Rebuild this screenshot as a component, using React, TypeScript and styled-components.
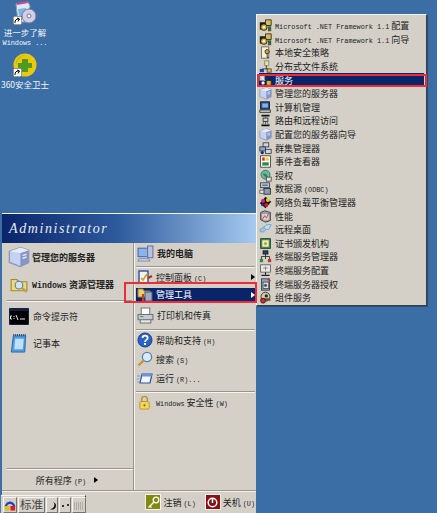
import React from 'react';
import styled, { createGlobalStyle } from 'styled-components';

const GlobalStyle = createGlobalStyle`
    html, body {
        margin: 0;
        padding: 0;
        background: #3a6ea5;
    }
    * {
        box-sizing: border-box;
    }
`;

const Desktop = styled.div`
    position: relative;
    width: 437px;
    height: 513px;
    overflow: hidden;
    background: #3a6ea5;
    font-family: 'Noto Sans CJK SC', 'Liberation Sans', sans-serif;
    font-size: 9px;
    color: #222222;
`;

const Shortcut = styled.div<{ $top: number }>`
    position: absolute;
    left: 0;
    top: ${(p) => p.$top}px;
    width: 50px;
    display: flex;
    flex-direction: column;
    align-items: center;
    color: #f2f5fa;
    line-height: 9px;
    white-space: nowrap;
`;

const ShortcutIcon = styled.div`
    position: relative;
    width: 24px;
    height: 24px;
    margin-bottom: 3px;
`;

const ShortcutLabel = styled.div`
    height: 9px;
    font-size: 8.5px;
`;

const Arrow = styled.svg`
    position: absolute;
    left: 0;
    bottom: 0;
`;

const Latin = styled.span<{ $bold?: boolean }>`
    font-family: 'Liberation Mono', monospace;
    font-size: ${(p) => (p.$bold ? 8.3 : 6.8)}px;
`;

const StartMenu = styled.div`
    position: absolute;
    left: 2px;
    top: 213px;
    width: 254px;
    height: 300px;
    display: flex;
    flex-direction: column;
    background: #d4d0c8;
    border-top: 1px solid #f4f4f0;
`;

const Banner = styled.div`
    height: 29px;
    flex: none;
    display: flex;
    align-items: center;
    padding-left: 7px;
    background: linear-gradient(90deg, #0a246a 0%, #2d5a9c 45%, #a6caf0 100%);
    color: #e8edf5;
    font-family: 'Liberation Serif', serif;
    font-style: italic;
    font-size: 14px;
    letter-spacing: 1.6px;
`;

const Columns = styled.div`
    flex: 1;
    display: flex;
    min-height: 0;
`;

const LeftColumn = styled.div`
    width: 131px;
    flex: none;
    display: flex;
    flex-direction: column;
    padding-left: 5px;
`;

const RightColumn = styled.div`
    flex: 1;
    display: flex;
    flex-direction: column;
    padding-left: 2px;
    border-left: 1px solid #9a978f;
    box-shadow: inset 1px 0 0 #f2f0ea;
`;

const Row = styled.div<{
    $h: number;
    $mt?: number;
    $active?: boolean;
    $gap?: number;
    $pl?: number;
    $strong?: boolean;
}>`
    display: flex;
    align-items: center;
    flex: none;
    gap: ${(p) => p.$gap ?? 3}px;
    height: ${(p) => p.$h}px;
    margin-top: ${(p) => p.$mt ?? 0}px;
    padding-left: ${(p) => p.$pl ?? 1}px;
    white-space: nowrap;
    font-weight: ${(p) => (p.$strong ? 700 : 400)};
    background: ${(p) => (p.$active ? '#0a246a' : 'transparent')};
    color: ${(p) => (p.$active ? '#ffffff' : 'inherit')};
`;

const RowArrow = styled.span<{ $light?: boolean; $inline?: boolean }>`
    margin-left: ${(p) => (p.$inline ? 0 : 'auto')};
    margin-right: ${(p) => (p.$inline ? 0 : 1)}px;
    width: 0;
    height: 0;
    border-left: 4px solid ${(p) => (p.$light ? '#ffffff' : '#000000')};
    border-top: 3px solid transparent;
    border-bottom: 3px solid transparent;
`;

const Rule = styled.div<{ $mt: number; $mb?: number; $inset?: number }>`
    height: 2px;
    flex: none;
    margin: ${(p) => p.$mt}px ${(p) => p.$inset ?? 1}px ${(p) => p.$mb ?? 0}px 0;
    border-top: 1px solid #97948c;
    border-bottom: 1px solid #f6f5f1;
`;

const Spacer = styled.div`
    flex: 1;
`;

const AllPrograms = styled.div`
    height: 20px;
    flex: none;
    display: flex;
    align-items: center;
    justify-content: center;
    gap: 8px;
    padding-right: 6px;
    white-space: nowrap;
`;

const Footer = styled.div`
    height: 23px;
    flex: none;
    display: flex;
    align-items: center;
    justify-content: flex-end;
    gap: 9px;
    padding-right: 1px;
    border-top: 1px solid #9a978f;
    box-shadow: inset 0 1px 0 #f2f0ea;
`;

const FooterButton = styled.div`
    display: flex;
    align-items: center;
    gap: 2px;
    white-space: nowrap;
`;

const FooterIcon = styled.div<{ $color: string }>`
    width: 16px;
    height: 16px;
    display: flex;
    align-items: center;
    justify-content: center;
    background: ${(p) => p.$color};
    border: 1px solid #f3f2ee;
`;

const LanguageBar = styled.div`
    position: absolute;
    left: 1px;
    top: 495px;
    width: 85px;
    height: 18px;
    display: flex;
    align-items: stretch;
    gap: 1px;
    padding: 1px 1px 0 2px;
    background: #d4d0c8;
    border-top: 1px solid #f4f4f0;
    border-right: 1px solid #333333;
    box-shadow: -1px 0 0 #4d7cb0;
`;

const LangKey = styled.div<{ $w: number }>`
    width: ${(p) => p.$w}px;
    flex: none;
    display: flex;
    align-items: center;
    justify-content: center;
    background: #d4d0c8;
    border: 1px solid;
    border-color: #f4f4f0 #77746c #77746c #f4f4f0;
    font-size: 11.5px;
    line-height: 1;
    color: #444444;
    white-space: nowrap;
`;

const Submenu = styled.div`
    position: absolute;
    left: 256px;
    top: 14px;
    width: 171px;
    height: 292px;
    padding: 4px 2px 2px 2px;
    background: #d4d0c8;
    border: 1px solid;
    border-color: #f4f4f0 #404040 #404040 #f4f4f0;
    box-shadow: 1px 1px 0 #244f7e;
`;

const SubRow = styled.div<{ $active?: boolean }>`
    height: 13.6px;
    display: flex;
    align-items: center;
    gap: 3px;
    padding-left: 0;
    white-space: nowrap;
    background: ${(p) => (p.$active ? '#0a246a' : 'transparent')};
    color: ${(p) => (p.$active ? '#ffffff' : 'inherit')};
`;

const Callout = styled.div<{ $l: number; $t: number; $w: number; $h: number }>`
    position: absolute;
    left: ${(p) => p.$l}px;
    top: ${(p) => p.$t}px;
    width: ${(p) => p.$w}px;
    height: ${(p) => p.$h}px;
    border: 2px solid #ee2b36;
    pointer-events: none;
`;

const shapes: Record<string, React.ReactNode> = {
    dotnet: (
        <>
            <rect x="1" y="4" width="8" height="9" fill="#1c1c1c" />
            <path d="M8 1h7v7H8z" fill="#d8bc50" stroke="#222" />
            <circle cx="6" cy="10" r="4" fill="#d8b030" stroke="#111" />
            <circle cx="6" cy="10" r="1.500" fill="#fff" />
            <path d="M11 9h4v6h-4z" fill="#2a6a3a" />
            <path d="M11 13h2v2h-2z" fill="#c62a2a" />
        </>
    ),
    policy: (
        <>
            <path d="M3 1h9v14H3z" fill="#f5f0d8" stroke="#555" />
            <circle cx="10" cy="7" r="2.600" fill="#d9a520" stroke="#222" />
            <path d="M10 9v5h2" stroke="#222" fill="none" />
        </>
    ),
    dfs: (
        <>
            <path d="M7 1h5v6H7z" fill="#f4e08a" stroke="#777" />
            <path d="M9 7v4M4 11h8" stroke="#222" />
            <rect x="1" y="11" width="5" height="4" fill="#1d3fa8" />
            <rect x="10" y="11" width="5" height="4" fill="#e8c23a" stroke="#444" />
        </>
    ),
    services: (
        <>
            <rect x="1" y="2" width="6" height="6" fill="#d8d8d8" stroke="#888" />
            <path d="M9 8h6v6H9z" fill="#d9b030" stroke="#222" />
            <circle cx="5" cy="11" r="2" fill="#fff" />
            <path d="M3 4l4 4" stroke="#fff" />
        </>
    ),
    server: (
        <>
            <path d="M1 4l8-3 6 2v9l-6 3-8-3z" fill="#c6d2f2" stroke="#8d97b8" />
            <path d="M9 5l6-2v9l-6 3z" fill="#8795c6" />
            <path d="M1 4l8 1 6-2-6-2z" fill="#e6ebfa" />
            <path d="M10.500 7l3-1M10.500 9l3-1" stroke="#e4e8f5" />
        </>
    ),
    computer: (
        <>
            <rect x="2" y="1" width="11" height="9" fill="#2a4f9a" stroke="#111" />
            <rect x="4" y="3" width="7" height="5" fill="#7fb2ea" />
            <path d="M1 11h13v3H1z" fill="#cfcfc8" stroke="#222" />
        </>
    ),
    routing: (
        <>
            <path d="M3 2h10M3 14h10" stroke="#111" strokeWidth="2" />
            <path d="M8 3v10M4 13l4-6 4 6" stroke="#2a5f6a" fill="none" />
            <rect x="5" y="5" width="6" height="4" fill="#d8d8d0" stroke="#222" />
        </>
    ),
    cluster: (
        <>
            <rect x="5" y="1" width="7" height="5" fill="#cfd6ea" stroke="#333" />
            <rect x="1" y="6" width="7" height="5" fill="#8fa4d8" stroke="#333" />
            <rect x="8" y="9" width="7" height="5" fill="#cfd6ea" stroke="#333" />
            <circle cx="4" cy="13" r="2" fill="#1b2d6b" />
        </>
    ),
    events: (
        <>
            <rect x="2" y="1" width="12" height="14" fill="#fff" stroke="#333" />
            <rect x="4" y="3" width="3" height="4" fill="#d92b2b" />
            <rect x="8" y="3" width="4" height="4" fill="#f0d020" />
            <rect x="4" y="9" width="8" height="4" fill="#2a8a4a" />
        </>
    ),
    license: (
        <>
            <circle cx="8" cy="7" r="5.500" fill="#6fb7a8" stroke="#2b6a60" />
            <path d="M5 5l4 1 2 4-5-1z" fill="#2f8f46" />
            <rect x="9" y="10" width="6" height="5" fill="#e8e4da" stroke="#444" />
        </>
    ),
    odbc: (
        <>
            <rect x="2" y="1" width="11" height="6" fill="#c5cbd8" stroke="#333" />
            <rect x="4" y="3" width="7" height="2" fill="#5b79b8" />
            <rect x="6" y="8" width="8" height="7" fill="#8d9ab5" stroke="#222" />
            <path d="M1 10h5v4H1z" fill="#e6e6e0" stroke="#555" />
        </>
    ),
    balance: (
        <>
            <path d="M8 1l7 6-7 8-7-6z" fill="#111" />
            <circle cx="11" cy="5" r="2.500" fill="#e0d020" />
            <circle cx="5" cy="6" r="2.500" fill="#d81f8a" />
            <circle cx="9" cy="11" r="2.500" fill="#d32020" />
            <circle cx="4" cy="11" r="1.600" fill="#2040c0" />
        </>
    ),
    perf: (
        <>
            <path d="M2 3l5-2 7 2v10l-6 2-6-3z" fill="#8fa2b8" stroke="#333" />
            <path d="M4 5h8v7H4z" fill="#e6d8c0" />
            <path d="M4 12l3-5 2 3 3-6" stroke="#c8252a" fill="none" />
        </>
    ),
    remote: (
        <>
            <path d="M1 8l5-3h4l-4 6H2z" fill="#9fc4e8" stroke="#6f9cc8" />
            <path d="M6 5l4-3h5l-3 6H8z" fill="#bcdcf4" stroke="#6f9cc8" />
        </>
    ),
    cert: (
        <>
            <rect x="2" y="2" width="12" height="12" fill="#3f8a4a" stroke="#1f3d22" />
            <rect x="4" y="4" width="8" height="8" fill="#f0ecc8" />
            <circle cx="8" cy="8" r="2" fill="#c9a227" />
        </>
    ),
    tsManager: (
        <>
            <rect x="5" y="1" width="6" height="4" fill="#2c3f7a" stroke="#111" />
            <path d="M8 5v6M3 8h10M3 8v3M13 8v3" stroke="#222" fill="none" />
            <rect x="1" y="11" width="4" height="4" fill="#2d8a3e" />
            <rect x="11" y="11" width="4" height="4" fill="#c92f2f" />
        </>
    ),
    tsConfig: (
        <>
            <rect x="2" y="1" width="12" height="9" fill="#eceae2" stroke="#555" />
            <path d="M5 5h6M8 3v5" stroke="#777" />
            <path d="M8 10v3M3 14h10" stroke="#222" strokeWidth="1.400" />
        </>
    ),
    tsLicense: (
        <>
            <rect x="3" y="1" width="10" height="14" fill="#8fa3c8" stroke="#334" />
            <rect x="5" y="5" width="7" height="8" fill="#f2e6a8" stroke="#444" />
            <circle cx="8" cy="9" r="2" fill="#2a5fbf" />
            <path d="M11 1l3 3" stroke="#c62a2a" strokeWidth="2" />
        </>
    ),
    component: (
        <>
            <circle cx="8" cy="7" r="5.500" fill="#d9c9a0" stroke="#222" />
            <path d="M2 9h12v3H2z" fill="#6b4a2a" />
            <circle cx="5" cy="12" r="3" fill="#d62b2b" stroke="#222" />
            <circle cx="9" cy="6" r="2" fill="#1d2b4a" />
        </>
    ),
    folder: (
        <>
            <path d="M1 4h5l2 2h7v8H1z" fill="#f0d878" stroke="#a08a30" />
            <circle cx="8" cy="9" r="3.400" fill="#cfe4f5" stroke="#5d7da0" />
            <path d="M10.500 11.500L15 15" stroke="#c79a4a" strokeWidth="2" />
        </>
    ),
    mypc: (
        <>
            <rect x="1" y="3" width="10" height="8" fill="#8ab4ea" stroke="#4a6aa8" />
            <path d="M10 1h5v11h-5z" fill="#b9c3e0" stroke="#66749c" />
            <path d="M2 13h9l1 2H1z" fill="#d6dcee" stroke="#7f8ab0" />
        </>
    ),
    control: (
        <>
            <rect x="2" y="2" width="9" height="12" fill="#f2f2ee" stroke="#2a52a8" strokeWidth="1.400" />
            <path d="M4 9l2 2 4-6" stroke="#d6a010" strokeWidth="1.600" fill="none" />
            <path d="M11 9l4-2" stroke="#c2281f" strokeWidth="2" />
        </>
    ),
    tools: (
        <>
            <path d="M1 2h5l1 2h6v6H1z" fill="#e8cf70" stroke="#9a8430" />
            <rect x="8" y="5" width="7" height="9" fill="#9fa9c8" stroke="#4d5777" />
            <path d="M6 7v8" stroke="#c9402a" strokeWidth="2" />
        </>
    ),
    printer: (
        <>
            <path d="M4 1h8v6H4z" fill="#fff" stroke="#777" />
            <path d="M1 7h14v5H1z" fill="#c7cbd2" stroke="#6b7078" />
            <path d="M3 12h10v3H3z" fill="#e9e9e4" stroke="#777" />
            <path d="M3 9h3" stroke="#3a9a4a" />
        </>
    ),
    help: (
        <>
            <circle cx="8" cy="8" r="7" fill="#2a62c8" stroke="#173b8a" />
            <path d="M5.500 6c0-3.200 5.200-3.200 5.200 0 0 2-2.700 1.800-2.700 4" stroke="#fff" strokeWidth="1.700" fill="none" />
            <rect x="7" y="11" width="2" height="2" fill="#fff" />
        </>
    ),
    search: (
        <>
            <circle cx="10" cy="6" r="4.600" fill="#dbeaf8" stroke="#5c7fa6" strokeWidth="1.300" />
            <path d="M6.500 9.500L1.500 14.500" stroke="#c2963a" strokeWidth="2.400" />
        </>
    ),
    run: (
        <>
            <path d="M5 4h10l-2 9H3z" fill="#f5f5f2" stroke="#2a52a8" strokeWidth="1.200" />
            <path d="M5 4h10l-.5 2.500H4.500z" fill="#6c95d8" />
            <path d="M0 6h3M0 9h2M0 12h2" stroke="#7f9ccc" />
        </>
    ),
    lock: (
        <>
            <path d="M5 7V4.500a3 3 0 016 0V7" stroke="#b8932c" strokeWidth="1.500" fill="none" />
            <rect x="3" y="7" width="10" height="8" rx="1" fill="#f4d65a" stroke="#b8932c" />
            <circle cx="8" cy="11" r="1.200" fill="#8a6a14" />
        </>
    ),
};

const Glyph = ({ name, size }: { name: string; size: number }): React.ReactElement => (
    <svg width={size} height={size} viewBox="0 0 16 16" style={{ flex: 'none' }}>
        {shapes[name]}
    </svg>
);

const subItems: { icon: string; label: React.ReactNode }[] = [
    { icon: 'dotnet', label: <><Latin>Microsoft .NET Framework 1.1</Latin> 配置</> },
    { icon: 'dotnet', label: <><Latin>Microsoft .NET Framework 1.1</Latin> 向导</> },
    { icon: 'policy', label: '本地安全策略' },
    { icon: 'dfs', label: '分布式文件系统' },
    { icon: 'services', label: '服务' },
    { icon: 'server', label: '管理您的服务器' },
    { icon: 'computer', label: '计算机管理' },
    { icon: 'routing', label: '路由和远程访问' },
    { icon: 'server', label: '配置您的服务器向导' },
    { icon: 'cluster', label: '群集管理器' },
    { icon: 'events', label: '事件查看器' },
    { icon: 'license', label: '授权' },
    { icon: 'odbc', label: <>数据源 <Latin>(ODBC)</Latin></> },
    { icon: 'balance', label: '网络负载平衡管理器' },
    { icon: 'perf', label: '性能' },
    { icon: 'remote', label: '远程桌面' },
    { icon: 'cert', label: '证书颁发机构' },
    { icon: 'tsManager', label: '终端服务管理器' },
    { icon: 'tsConfig', label: '终端服务配置' },
    { icon: 'tsLicense', label: '终端服务器授权' },
    { icon: 'component', label: '组件服务' },
];

const ShortcutArrow = (): React.ReactElement => (
    <Arrow width="9" height="9" viewBox="0 0 9 9">
        <rect width="9" height="9" fill="#fff" stroke="#333" />
        <path d="M2 7c0-3 1-4 4-4M4 2l2.500 1L5 5.500" stroke="#000" fill="none" />
    </Arrow>
);

const App = (): React.ReactElement => {
    return (
        <Desktop>
            <GlobalStyle />

            <Shortcut $top={1}>
                <ShortcutIcon>
                    <svg width="24" height="24" viewBox="0 0 24 24">
                        <path d="M3 3l12-2 2 4-3 16H5z" fill="#dfe8f2" stroke="#8aa0b8" />
                        <path d="M5 8l8-1v8H6z" fill="#7db5e4" />
                        <path d="M4 3l11-2" stroke="#d04a8a" strokeWidth="2" />
                        <circle cx="16" cy="15" r="7" fill="#cfcfe8" stroke="#77779a" />
                        <circle cx="16" cy="15" r="2" fill="#f4f4fa" stroke="#77779a" />
                    </svg>
                    <ShortcutArrow />
                </ShortcutIcon>
                <ShortcutLabel>进一步了解</ShortcutLabel>
                <ShortcutLabel><Latin>Windows ...</Latin></ShortcutLabel>
            </Shortcut>

            <Shortcut $top={53}>
                <ShortcutIcon>
                    <svg width="24" height="24" viewBox="0 0 24 24">
                        <circle cx="12" cy="12" r="11.500" fill="#e9c80e" />
                        <path d="M3 13A10 10 0 0112 2a11 11 0 00-9 11z" fill="#4aa82a" />
                        <path d="M9 6h6v4h4v5h-4v4H9v-4H5v-5h4z" fill="#4f9a1f" />
                    </svg>
                    <ShortcutArrow />
                </ShortcutIcon>
                <ShortcutLabel>360安全卫士</ShortcutLabel>
            </Shortcut>

            <StartMenu>
                <Banner>Administrator</Banner>
                <Columns>
                    <LeftColumn>
                        <Row $h={22} $mt={3} $gap={2} $strong>
                            <Glyph name="server" size={22} />
                            管理您的服务器
                        </Row>
                        <Row $h={22} $mt={5} $pl={3} $gap={4} $strong>
                            <Glyph name="folder" size={18} />
                            <span><Latin $bold>Windows</Latin> 资源管理器</span>
                        </Row>
                        <Rule $mt={5} />
                        <Row $h={18} $mt={5} $pl={2} $gap={4}>
                            <svg width="20" height="17" viewBox="0 0 20 17" style={{ flex: 'none' }}>
                                <rect width="20" height="17" rx="1" fill="#14203f" />
                                <rect x="1" y="3" width="18" height="13" fill="#000" />
                                <path d="M3 8H1.500v3H3M5 8v1M5 10v1M7 7l2 5M11 11h5" stroke="#e8e8e8" fill="none" />
                            </svg>
                            命令提示符
                        </Row>
                        <Row $h={18} $mt={9} $pl={3} $gap={5}>
                            <svg width="18" height="19" viewBox="0 0 18 20" style={{ flex: 'none' }}>
                                <path d="M3 2h13l-1 17H1z" fill="#4f9fe0" stroke="#2a62a8" />
                                <path d="M5 5h9l-1 11H4z" fill="#bfe0f8" />
                                <path d="M3 1h13" stroke="#2a3f8a" strokeWidth="2" strokeDasharray="1 1" />
                            </svg>
                            记事本
                        </Row>
                        <Spacer />
                        <Rule $mt={0} $inset={0} />
                        <AllPrograms>
                            <span>所有程序 <Latin>(P)</Latin></span>
                            <RowArrow $inline />
                        </AllPrograms>
                    </LeftColumn>
                    <RightColumn>
                        <Row $h={18} $mt={1} $strong>
                            <Glyph name="mypc" size={17} />
                            我的电脑
                        </Row>
                        <Rule $mt={4} />
                        <Row $h={16} $mt={1}>
                            <Glyph name="control" size={16} />
                            <span>控制面板 <Latin>(C)</Latin></span>
                            <RowArrow />
                        </Row>
                        <Row $h={13} $mt={3} $active>
                            <Glyph name="tools" size={16} />
                            管理工具
                            <RowArrow $light />
                        </Row>
                        <Row $h={18} $mt={5}>
                            <Glyph name="printer" size={17} />
                            打印机和传真
                        </Row>
                        <Rule $mt={5} />
                        <Row $h={18}>
                            <Glyph name="help" size={16} />
                            <span>帮助和支持 <Latin>(H)</Latin></span>
                        </Row>
                        <Row $h={18} $mt={1}>
                            <Glyph name="search" size={16} />
                            <span>搜索 <Latin>(S)</Latin></span>
                        </Row>
                        <Row $h={18} $mt={1}>
                            <Glyph name="run" size={16} />
                            <span>运行 <Latin>(R)...</Latin></span>
                        </Row>
                        <Rule $mt={4} />
                        <Row $h={18} $gap={4}>
                            <Glyph name="lock" size={15} />
                            <span><Latin>Windows</Latin> 安全性 <Latin>(W)</Latin></span>
                        </Row>
                    </RightColumn>
                </Columns>
                <Footer>
                    <FooterButton>
                        <FooterIcon $color="#808a10">
                            <svg width="13" height="13" viewBox="0 0 13 13">
                                <circle cx="9" cy="4" r="2.800" fill="none" stroke="#fff" strokeWidth="1.300" />
                                <path d="M7 6l-5.500 5.500M3 10l1.500 1.500" stroke="#fff" strokeWidth="1.300" />
                            </svg>
                        </FooterIcon>
                        <span>注销 <Latin>(L)</Latin></span>
                    </FooterButton>
                    <FooterButton>
                        <FooterIcon $color="#8a0f14">
                            <svg width="13" height="13" viewBox="0 0 13 13">
                                <circle cx="6.500" cy="6.500" r="4.300" fill="none" stroke="#fff" strokeWidth="1.500" />
                                <path d="M6.500 3v4" stroke="#fff" strokeWidth="1.600" />
                            </svg>
                        </FooterIcon>
                        <span>关机 <Latin>(U)</Latin></span>
                    </FooterButton>
                </Footer>
            </StartMenu>

            <LanguageBar>
                <LangKey $w={14}>
                    <svg width="13" height="13" viewBox="0 0 13 13">
                        <path d="M2 8a4.500 4.500 0 019 0" stroke="#2040c0" strokeWidth="2.500" fill="none" />
                        <rect x="1" y="7" width="5" height="5" fill="#d8c020" />
                        <rect x="7" y="7" width="5" height="5" fill="#d82020" />
                    </svg>
                </LangKey>
                <LangKey $w={27}>标准</LangKey>
                <LangKey $w={12}>
                    <svg width="9" height="9" viewBox="0 0 9 9">
                        <path d="M5 1a4 4 0 01-3 7 4 4 0 006-4c0-1-1-2-3-3z" fill="#111" />
                    </svg>
                </LangKey>
                <LangKey $w={12}>
                    <svg width="9" height="9" viewBox="0 0 9 9">
                        <path d="M1 4h2v2H1zM6 3h2v2H6z" fill="#333" />
                    </svg>
                </LangKey>
                <LangKey $w={14}>
                    <svg width="12" height="9" viewBox="0 0 12 9">
                        <path d="M1 2h10M1 4h10M1 6h10M1 8h10" stroke="#8d8a82" strokeDasharray="1 1" />
                    </svg>
                </LangKey>
            </LanguageBar>

            <Submenu>
                {subItems.map((item, i) => (
                    <SubRow key={i} $active={item.icon === 'services'}>
                        <Glyph name={item.icon} size={13} />
                        <span>{item.label}</span>
                    </SubRow>
                ))}
            </Submenu>

            <Callout $l={257} $t={74} $w={170} $h={13} />
            <Callout $l={124} $t={282} $w={133} $h={21} />
        </Desktop>
    );
};

export default App;
